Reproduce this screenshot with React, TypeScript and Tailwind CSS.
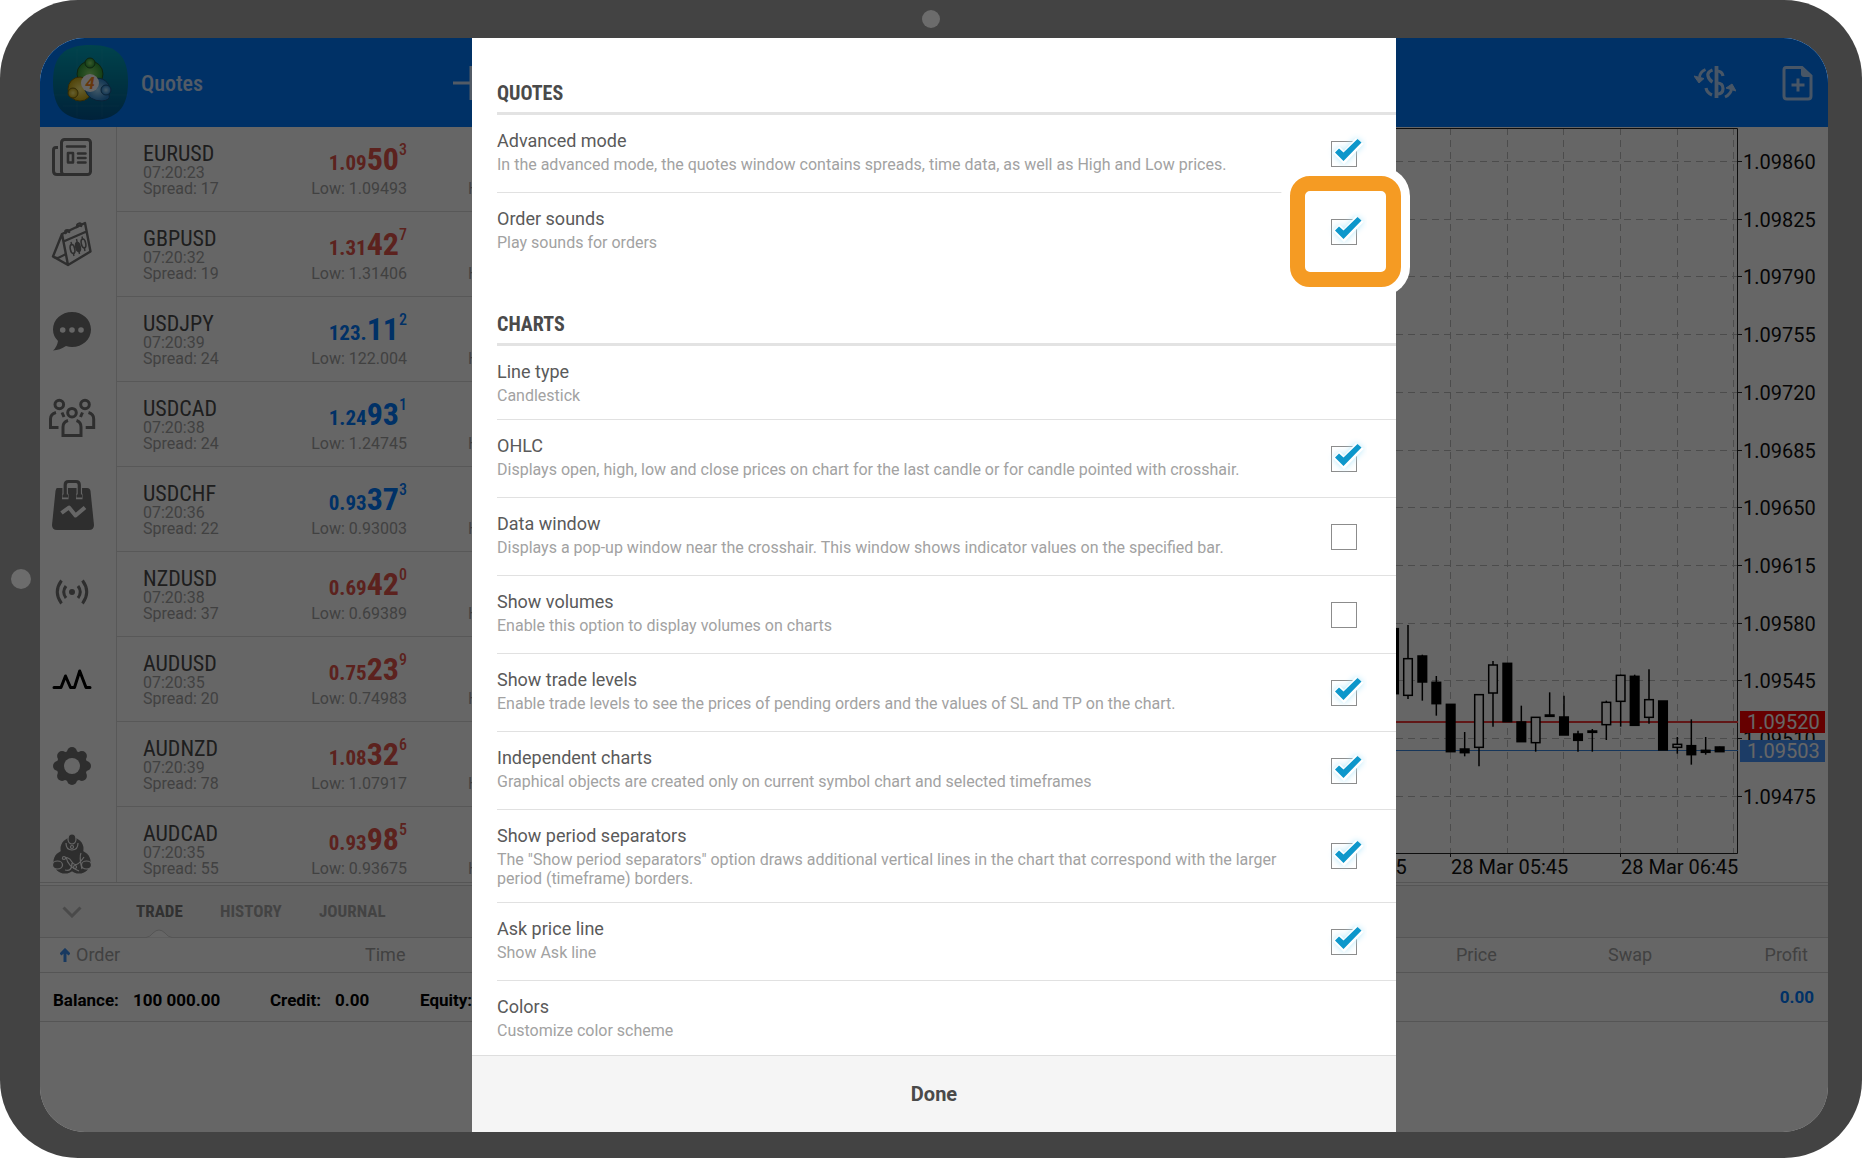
import React, { useState } from "react";

type Quote = {
  symbol: string;
  time: string;
  spread: number;
  base: string;
  big: string;
  sup: string;
  low: string;
  up?: boolean;
};

type Setting = {
  id: string;
  title: string;
  text: string;
  checkbox?: boolean;
  highlight?: boolean;
};

const quotes: Quote[] = [
  { symbol: "EURUSD", time: "07:20:23", spread: 17, base: "1.09", big: "50", sup: "3", low: "1.09493" },
  { symbol: "GBPUSD", time: "07:20:32", spread: 19, base: "1.31", big: "42", sup: "7", low: "1.31406" },
  { symbol: "USDJPY", time: "07:20:39", spread: 24, base: "123.", big: "11", sup: "2", low: "122.004", up: true },
  { symbol: "USDCAD", time: "07:20:38", spread: 24, base: "1.24", big: "93", sup: "1", low: "1.24745", up: true },
  { symbol: "USDCHF", time: "07:20:36", spread: 22, base: "0.93", big: "37", sup: "3", low: "0.93003", up: true },
  { symbol: "NZDUSD", time: "07:20:38", spread: 37, base: "0.69", big: "42", sup: "0", low: "0.69389" },
  { symbol: "AUDUSD", time: "07:20:35", spread: 20, base: "0.75", big: "23", sup: "9", low: "0.74983" },
  { symbol: "AUDNZD", time: "07:20:39", spread: 78, base: "1.08", big: "32", sup: "6", low: "1.07917" },
  { symbol: "AUDCAD", time: "07:20:35", spread: 55, base: "0.93", big: "98", sup: "5", low: "0.93675" },
];

const quoteSettings: Setting[] = [
  {
    id: "advanced",
    title: "Advanced mode",
    text: "In the advanced mode, the quotes window contains spreads, time data, as well as High and Low prices.",
    checkbox: true,
  },
  { id: "sounds", title: "Order sounds", text: "Play sounds for orders", checkbox: true, highlight: true },
];

const chartSettings: Setting[] = [
  { id: "line", title: "Line type", text: "Candlestick" },
  {
    id: "ohlc",
    title: "OHLC",
    text: "Displays open, high, low and close prices on chart for the last candle or for candle pointed with crosshair.",
    checkbox: true,
  },
  {
    id: "data",
    title: "Data window",
    text: "Displays a pop-up window near the crosshair. This window shows indicator values on the specified bar.",
    checkbox: true,
  },
  { id: "volumes", title: "Show volumes", text: "Enable this option to display volumes on charts", checkbox: true },
  {
    id: "levels",
    title: "Show trade levels",
    text: "Enable trade levels to see the prices of pending orders and the values of SL and TP on the chart.",
    checkbox: true,
  },
  {
    id: "independent",
    title: "Independent charts",
    text: "Graphical objects are created only on current symbol chart and selected timeframes",
    checkbox: true,
  },
  {
    id: "separators",
    title: "Show period separators",
    text: 'The "Show period separators" option draws additional vertical lines in the chart that correspond with the larger period (timeframe) borders.',
    checkbox: true,
  },
  { id: "ask", title: "Ask price line", text: "Show Ask line", checkbox: true },
  { id: "colors", title: "Colors", text: "Customize color scheme" },
];

// x, high, body top, body bottom, low, filled (3 units per pixel)
const candles: [number, number, number, number, number, boolean][] = [
  [12, 146, 146, 341, 341, true],
  [54, 135, 236, 346, 357, false],
  [97, 224, 228, 306, 362, true],
  [139, 288, 307, 371, 407, true],
  [182, 373, 373, 515, 515, true],
  [224, 456, 507, 518, 529, true],
  [267, 344, 344, 502, 559, false],
  [309, 243, 255, 339, 440, false],
  [352, 250, 250, 425, 425, true],
  [394, 377, 426, 485, 485, true],
  [437, 412, 412, 488, 515, false],
  [479, 337, 405, 409, 411, true],
  [522, 347, 411, 465, 465, true],
  [564, 452, 462, 481, 515, true],
  [607, 447, 453, 457, 515, true],
  [649, 362, 367, 434, 480, false],
  [692, 284, 286, 364, 440, false],
  [734, 284, 289, 436, 436, true],
  [777, 268, 359, 412, 431, false],
  [819, 363, 363, 510, 510, true],
  [862, 471, 493, 502, 521, false],
  [904, 418, 497, 524, 554, true],
  [947, 471, 511, 517, 524, true],
  [989, 500, 501, 515, 515, true],
];

const priceLabels = [
  "1.09860", "1.09825", "1.09790", "1.09755", "1.09720", "1.09685",
  "1.09650", "1.09615", "1.09580", "1.09545", "1.09510", "1.09475",
];

const Logo = () => (
  <svg width="76" height="76" viewBox="0 0 76 76">
    <defs>
      <linearGradient id="logoBg" x1="0" y1="0" x2="0" y2="1">
        <stop offset="0" stopColor="#00a8c0" />
        <stop offset="0.5" stopColor="#0080a4" />
        <stop offset="1" stopColor="#005592" />
      </linearGradient>
      <radialGradient id="logoGreen"><stop offset="0" stopColor="#8fe070" /><stop offset="1" stopColor="#2f9a38" /></radialGradient>
      <radialGradient id="logoYellow"><stop offset="0" stopColor="#fff07a" /><stop offset="1" stopColor="#c9a814" /></radialGradient>
      <radialGradient id="logoBlue"><stop offset="0" stopColor="#a5dcff" /><stop offset="1" stopColor="#2b86d0" /></radialGradient>
    </defs>
    <path d="M38 0C64 0 75 11 75 37S64 75 38 75 0 64 0 37 12 0 38 0Z" fill="url(#logoBg)" />
    <path d="M0 50H75M10 61H66M24 4V72M49 4V72" stroke="#fff" strokeOpacity="0.06" />
    <circle cx="37" cy="29" r="13" fill="url(#logoGreen)" stroke="#24592a" />
    <circle cx="27" cy="44" r="12" fill="url(#logoYellow)" stroke="#7a6a10" />
    <path d="M33 46A12 12 0 1 1 56 50Q58 55 49 56 36 56 32 45Z" fill="url(#logoBlue)" stroke="#1a5688" />
    <circle cx="37" cy="18" r="5" fill="url(#logoGreen)" stroke="#24592a" />
    <circle cx="20" cy="48" r="5" fill="url(#logoYellow)" stroke="#7a6a10" />
    <circle cx="53" cy="45" r="5" fill="url(#logoBlue)" stroke="#1a5688" />
    <circle cx="37" cy="38" r="9" fill="#fff" />
    <text x="37" y="44" textAnchor="middle" fontSize="17" fontWeight="700" fontStyle="italic" fill="#ff8a1e">4</text>
  </svg>
);

const Icon = ({ children }: { children: React.ReactNode }) => (
  <svg width="48" height="52" viewBox="0 -2 48 52" fill="none" stroke="#737373" strokeWidth="3" strokeLinejoin="round">
    {children}
  </svg>
);

const sideItems: { label: string; icon: React.ReactNode }[] = [
  {
    label: "News",
    icon: (
      <Icon>
        <rect x="13.5" y="6.5" width="29" height="35" rx="3" />
        <path d="M10 14.5H8Q5.5 14.5 5.5 17V38Q5.5 41.5 9 41.5H17" />
        <path d="M19 13.5H37M30 20.5H37.5M30 25H37.5M30 29.5H37.5" strokeLinecap="round" strokeWidth="2.6" />
        <rect x="20" y="20" width="5" height="9.5" strokeWidth="2.6" />
      </Icon>
    ),
  },
  {
    label: "Calendar",
    icon: (
      <Icon>
        <path d="M14 14L37 3 42.5 31.5 20 45ZM14 14L5 36.5 20 45M15.5 21.5L38.5 11.5" strokeWidth="2.4" />
        <path d="M18 14Q16 10 19 10T21 13M29.5 8Q28 4 31 3.5T33 7" strokeWidth="2.2" />
        <path d="M18 34L10 38 5 37" strokeWidth="2" />
        <ellipse cx="24.5" cy="29" rx="2.2" ry="4.5" strokeWidth="1.6" transform="rotate(-12 24.5 29)" />
        <ellipse cx="30" cy="27" rx="2.2" ry="4.5" fill="#737373" strokeWidth="1.6" transform="rotate(-12 30 27)" />
        <ellipse cx="35.5" cy="23.5" rx="2.2" ry="4.5" strokeWidth="1.6" transform="rotate(-12 35.5 23.5)" />
        <path d="M23 22L23.7 25M25.3 33L26 36M28.5 19L31.5 34M34 16.5L34.7 19.5M36.3 28L37 31" strokeWidth="1.4" />
      </Icon>
    ),
  },
  {
    label: "Chat",
    icon: (
      <Icon>
        <path d="M24 5C34.5 5 43 12.5 43 22.5S34.5 40 24 40Q21 40 18 39 12 43 5 43.5 9 40 10 34 5 29 5 22.5C5 12.5 13.5 5 24 5Z" fill="#737373" stroke="none" />
        <g fill="#fff" stroke="none">
          <circle cx="14.7" cy="23" r="2.8" />
          <circle cx="24" cy="23" r="2.8" />
          <circle cx="33" cy="23" r="2.8" />
        </g>
      </Icon>
    ),
  },
  {
    label: "Community",
    icon: (
      <Icon>
        <circle cx="11.3" cy="10.5" r="4.3" />
        <circle cx="37" cy="10.5" r="4.3" />
        <circle cx="24" cy="18.7" r="4.3" />
        <path d="M8 18.5Q2.5 20 2.5 25V33.5H10.5M14 18.5L16 23M40.5 18.5Q45.7 20 45.7 25V33.5H37.7M34.5 18.5L32.5 23" strokeLinejoin="miter" />
        <path d="M20 26.5Q15 28 15 33V41.5H33V33Q33 28 28.5 26.5" strokeLinejoin="miter" />
      </Icon>
    ),
  },
  {
    label: "Market",
    icon: (
      <Icon>
        <path d="M9 7H39Q42 7 42.5 10L46 44Q46 49 41 49H9Q4 49 4 44L7.5 10Q8 7 9 7Z" fill="#737373" stroke="none" />
        <path d="M14 15.5H20.5M28 15.5H34.5M17.2 15V7M31.3 15V7" stroke="#fff" strokeWidth="5.5" />
        <path d="M14.5 15H20M28.5 15H34M17.2 15V4Q17.2 0.5 20.5 0.5H28Q31.3 0.5 31.3 4V15" strokeWidth="3.2" />
        <path d="M13.5 32L21 26.5 27.5 34.5 37 26.5" stroke="#fff" strokeWidth="4" />
      </Icon>
    ),
  },
  {
    label: "Signals",
    icon: (
      <Icon>
        <circle cx="24" cy="24" r="3" fill="#737373" stroke="none" />
        <path d="M18 18Q13.5 24 18 30M30 18Q34.5 24 30 30M13.5 12.5Q5 24 13.5 35.5M34.5 12.5Q43 24 34.5 35.5" />
      </Icon>
    ),
  },
  {
    label: "Trade",
    icon: (
      <Icon>
        <path d="M6 32.5H13L17.5 21 22.5 32.5H26.5L31.7 16 38 32.5H42" stroke="#000" strokeLinecap="round" />
      </Icon>
    ),
  },
  {
    label: "Settings",
    icon: (
      <Icon>
        <g fill="#737373" stroke="none">
          {[0, 45, 90, 135, 180, 225, 270, 315].map((a) => (
            <circle key={a} cx="24" cy="10" r="5" transform={`rotate(${a} 24 24)`} />
          ))}
          <circle cx="24" cy="24" r="15.5" />
        </g>
        <circle cx="24" cy="24" r="8" fill="#fff" stroke="none" />
      </Icon>
    ),
  },
  {
    label: "About",
    icon: (
      <Icon>
        <g fill="#737373" stroke="none">
          <circle cx="24" cy="20" r="11.5" />
          <circle cx="17" cy="33" r="11.5" />
          <circle cx="31" cy="33" r="11.5" />
        </g>
        <g stroke="#fff" strokeWidth="1.2" fill="#737373">
          <ellipse cx="24" cy="10" rx="4" ry="5" />
          <ellipse cx="9.5" cy="36" rx="5" ry="4" />
          <ellipse cx="38.5" cy="36" rx="5" ry="4" />
          <path d="M18 14Q18 21 24 21T30 14M14 30Q20 26 24 33T36 28M17 41Q24 43 24 34M31 42Q20 38 18 28M34 40Q31 28 33 24" fill="none" />
          <circle cx="24" cy="18" r="1.5" />
          <circle cx="16" cy="29" r="1.5" />
          <circle cx="27" cy="38" r="1.5" />
        </g>
      </Icon>
    ),
  },
];

const Header = () => (
  <header className="flex h-[89px] items-center bg-[#007aff] pr-[14px] pl-[13px] text-white">
    <Logo />
    <h1 className="ml-3 w-[312px] pt-[2px] font-['Roboto_Condensed',Roboto,sans-serif] text-[22px] leading-7 font-medium text-white/80">
      Quotes
    </h1>
    <button aria-label="Add symbol" className="opacity-80">
      <svg width="36" height="36" viewBox="0 0 36 36" stroke="currentColor" strokeWidth="3">
        <path d="M0 18H36M18 1V35" />
      </svg>
    </button>
    <div className="ml-auto flex items-center gap-[46px]">
      <button aria-label="Trade" className="opacity-70">
        <svg width="42" height="34" viewBox="0 0 42 34" fill="none" stroke="currentColor" strokeWidth="3.2">
          <path d="M22.5 0V32" strokeWidth="3.8" />
          <path d="M23 5Q28 5 29 10M23 17Q29 17 29 22.5T23 28M18.5 4Q13 6 14 10T18.5 16M12 22Q13 27 18 29" />
          <path d="M11.5 3.5Q6 6 5.5 11M31 31Q37 28 37.5 23" strokeWidth="2.8" />
          <path d="M0 10L10 12.5 5 17ZM32 22L38 18 42 25Z" fill="currentColor" stroke="currentColor" strokeWidth="1" />
        </svg>
      </button>
      <button aria-label="New order" className="opacity-70">
        <svg width="32" height="36" viewBox="0 0 32 36" fill="none" stroke="currentColor" strokeWidth="3">
          <path d="M4 2.5H20L29 11V31Q29 34 26 34H5Q2 34 2 31V5Q2 2.5 4 2.5Z" />
          <path d="M19 2L30 12H22Q19 12 19 9Z" fill="currentColor" stroke="none" />
          <path d="M9.5 20H22.5M16 13.5V26.5" />
        </svg>
      </button>
    </div>
  </header>
);

const QuoteRow = ({ quote }: { quote: Quote }) => (
  <li className="flex h-[85px] border-b border-[#dcdcdc] pt-[14px] pl-[26px] text-base leading-4 text-[#a3a3a3]">
    <div className="w-[160px] shrink-0">
      <div className="h-6 font-['Roboto_Condensed',Roboto,sans-serif] text-[22px] leading-[26px] text-[#4d4d4d]">{quote.symbol}</div>
      <div>{quote.time}</div>
      <div>Spread: {quote.spread}</div>
    </div>
    <div className="flex w-[104px] shrink-0 flex-col items-end">
      <div className={`flex h-10 items-start font-['Roboto_Condensed',Roboto,sans-serif] font-bold ${quote.up ? "text-[#007aff]" : "text-[#e5554b]"}`}>
        <span className="pt-[10px] text-[21px] leading-6">{quote.base}</span>
        <span className="text-[32px] leading-9">{quote.big}</span>
        <span className="text-base leading-[18px] font-medium">{quote.sup}</span>
      </div>
      <div className="whitespace-nowrap">Low: {quote.low}</div>
    </div>
    <div className="flex shrink-0 items-end pb-[14px] pl-[61px]">H</div>
  </li>
);

const Chart = () => (
  <svg width="432" height="755" viewBox="0 0 432 755" fontSize="20" className="ml-auto shrink-0">
    <g stroke="#bdbdbd" strokeWidth="1" strokeDasharray="7 5">
      {[54, 111, 167, 224, 281, 337].map((x) => (
        <path key={x} d={`M${x + 0.5} 1V726`} />
      ))}
      {priceLabels.map((p, i) => (
        <path key={p} d={`M0 ${Math.round(34 + i * 57.7) + 0.5}H341`} />
      ))}
    </g>
    <path d="M0 1.5H341.5V726.5H0M54.5 726V730M224.5 726V730" fill="none" stroke="#222" />
    <path d="M0 595H342" stroke="#f23a3a" strokeWidth="2" />
    <path d="M0 623.5H342" stroke="#3b87e0" />
    {candles.map(([x, high, top, bottom, low, filled]) => (
      <g key={x} transform="translate(-6 453)" stroke="#000" strokeWidth="1.5">
        <path d={`M${x / 3} ${high / 3}V${low / 3}`} />
        <rect
          x={x / 3 - 4.3}
          y={top / 3}
          width="8.6"
          height={(bottom - top) / 3}
          fill={filled ? "#000" : "#fff"}
        />
      </g>
    ))}
    {priceLabels.map((p, i) => (
      <g key={p}>
        <path d={`M342 ${Math.round(34 + i * 57.7) + 0.5}h4`} stroke="#222" />
        <text x="347" y={Math.round(42 + i * 57.7)} fill="#111">{p}</text>
      </g>
    ))}
    <rect x="344" y="584" width="85" height="22" fill="#f00" />
    <rect x="344" y="613" width="85" height="22" fill="#4696ff" />
    <text x="351" y="602" fill="#fff">1.09520</text>
    <text x="351" y="631" fill="#fff">1.09503</text>
    <text x="5" y="747" textAnchor="middle" fill="#111">5</text>
    <text x="55" y="747" fill="#111">28 Mar 05:45</text>
    <text x="225" y="747" fill="#111">28 Mar 06:45</text>
  </svg>
);

const TradePanel = () => (
  <section className="border-t border-[#d4d4d4] pt-[2px]">
    <div className="flex h-[53px] items-center border-y border-[#d4d4d4] bg-[#f6f6f6] pl-[22px] font-['Roboto_Condensed',Roboto,sans-serif] text-[17px] font-bold text-[#a8a8a8]">
      <button aria-label="Collapse" className="w-[74px]">
        <svg width="20" height="12" viewBox="0 0 20 12" fill="none" stroke="#b8b8b8" strokeWidth="3">
          <path d="M1.5 1.5L10 10 18.5 1.5" />
        </svg>
      </button>
      <button className="relative flex h-full w-[84px] items-center text-[#7a7a7a]">
        TRADE
        <svg width="26" height="9" viewBox="0 0 26 9" className="absolute -bottom-px left-[10px]" fill="#fff" stroke="#d4d4d4">
          <path d="M0 8.5Q4 8 7 4 13-2 19 4 22 8 26 8.5" />
        </svg>
      </button>
      <button className="w-[99px] text-left">HISTORY</button>
      <button>JOURNAL</button>
    </div>
    <table className="w-full table-fixed border-collapse text-[17px] leading-6 text-[#a3a3a3]">
      <thead>
        <tr className="h-[34px] border-b border-[#d4d4d4] text-lg leading-6">
          <th scope="col" className="w-[325px] pl-5 text-left font-normal">
            <span className="flex items-center gap-[6px]">
              <svg width="10" height="14" viewBox="0 0 10 14" fill="none" stroke="#3d8ff0" strokeWidth="3">
                <path d="M5 14V3M0.5 6.5L5 2 9.5 6.5" />
              </svg>
              Order
            </span>
          </th>
          <th scope="col" className="text-left font-normal">Time</th>
          <th scope="col" className="w-[152px] text-left font-normal">Price</th>
          <th scope="col" className="w-[115px] text-left font-normal">Swap</th>
          <th scope="col" className="w-[105px] pr-5 text-right font-normal">Profit</th>
        </tr>
      </thead>
      <tbody>
        <tr className="h-[49px] border-b border-[#d4d4d4] font-bold text-black">
          <td colSpan={4} className="pt-[6px] pl-[13px]">
            <div className="flex whitespace-nowrap">
              <span className="w-[80px]">Balance:</span>
              <span className="w-[137px]">100 000.00</span>
              <span className="w-[65px]">Credit:</span>
              <span className="w-[85px]">0.00</span>
              <span>Equity:</span>
            </div>
          </td>
          <td className="pr-[14px] text-right text-[#007aff]">0.00</td>
        </tr>
      </tbody>
    </table>
  </section>
);

type RowProps = {
  item: Setting;
  last: boolean;
  checked: boolean;
  onChange: (value: boolean) => void;
};

const SettingRow = ({ item, last, checked, onChange }: RowProps) => (
  <div className={`flex items-center border-b ${last ? "border-transparent" : "border-[#e1e1e1]"} ${item.checkbox ? "min-h-[78px]" : ""}`}>
    <label htmlFor={item.checkbox ? item.id : undefined} className="min-w-0 flex-1 self-start pt-3 pb-[14px]">
      <span className="block text-lg leading-7 text-[#5a5a5a]">{item.title}</span>
      <span className="block text-base leading-[19px] text-[#a2a2a2]">{item.text}</span>
    </label>
    {item.checkbox && (
      <div className="relative mr-[39px] ml-[26px] size-[26px]">
        {item.highlight && (
          <div className="absolute -top-[43px] -left-[41px] size-[111px] rounded-[20px] border-[15px] border-[#f59b23] bg-white ring-9 ring-white" />
        )}
        <input
          id={item.id}
          type="checkbox"
          checked={checked}
          onChange={(e) => onChange(e.target.checked)}
          className="relative block size-[26px] appearance-none border border-[#8c8c8c] bg-white"
        />
        {checked && (
          <svg width="40" height="36" viewBox="0 0 40 36" className="pointer-events-none absolute -top-2 -left-1">
            <path d="M8 20L12.5 15.5 17 20 29 7 34.5 11 17 29Z" fill="#fff" stroke="#fff" strokeWidth="3" className="drop-shadow-[0_0_3px_#b5e8fb]" />
            <path d="M8 19.5L12 15.5 16.5 19.5 30.5 6 34.5 9.5 16.5 28Z" fill="#0d97cb" />
          </svg>
        )}
      </div>
    )}
  </div>
);

const App: React.FC = () => {
  const [values, setValues] = useState<Record<string, boolean>>({
    advanced: true,
    sounds: true,
    ohlc: true,
    levels: true,
    independent: true,
    separators: true,
    ask: true,
  });

  const renderGroup = (title: string, items: Setting[]) => (
    <section className="pl-[25px]">
      <h2 className="border-b-3 border-[#e3e3e3] pt-[41px] pb-[7px] font-['Roboto_Condensed',Roboto,sans-serif] text-xl leading-6 font-bold text-[#4a4a4a]">
        {title}
      </h2>
      {items.map((item, i) => (
        <SettingRow
          key={item.id}
          item={item}
          last={i === items.length - 1}
          checked={!!values[item.id]}
          onChange={(value) => setValues({ ...values, [item.id]: value })}
        />
      ))}
    </section>
  );

  return (
    <div className="relative flex min-h-screen rounded-[78px] bg-[#434343] pt-[38px] pr-[34px] pb-[26px] pl-10 font-[Roboto,sans-serif]">
      <div className="absolute top-[10px] left-1/2 size-[18px] -translate-x-1/2 rounded-full bg-[#6c6c6c]" />
      <div className="absolute top-1/2 left-[11px] size-5 -translate-y-1/2 rounded-full bg-[#6c6c6c]" />
      <div className="grid min-w-0 flex-1 overflow-hidden rounded-[45px] bg-white">
        <div className="isolate min-w-0 [grid-area:1/1]">
          <Header />
          <main className="flex h-[755px] overflow-hidden">
            <nav className="flex w-[77px] shrink-0 flex-col items-center gap-[27px] border-r border-[#dcdcdc] pr-3">
              {sideItems.map((item) => (
                <button key={item.label} aria-label={item.label} className="flex h-[60px] shrink-0 items-center">
                  {item.icon}
                </button>
              ))}
            </nav>
            <ul className="w-[364px] shrink-0">
              {quotes.map((quote) => (
                <QuoteRow key={quote.symbol} quote={quote} />
              ))}
            </ul>
            <Chart />
          </main>
          <TradePanel />
        </div>
        <div className="relative z-10 flex justify-center bg-black/60 [grid-area:1/1]">
          <div role="dialog" aria-label="Settings" className="flex w-[924px] flex-col bg-white pt-[2px]">
            {renderGroup("QUOTES", quoteSettings)}
            {renderGroup("CHARTS", chartSettings)}
            <button className="mt-auto h-[77px] border-t border-[#dedede] bg-[#f5f5f5] text-xl font-bold text-[#4a4a4a]">
              Done
            </button>
          </div>
        </div>
      </div>
    </div>
  );
};

export default App;
